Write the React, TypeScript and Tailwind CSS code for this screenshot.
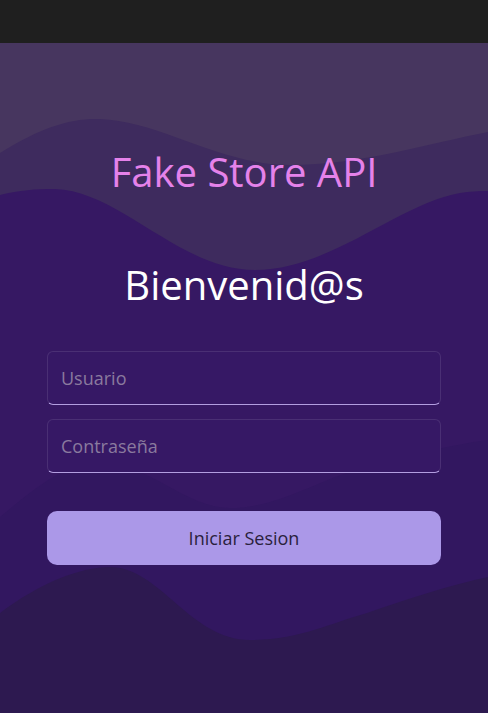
import React, { useState } from 'react';

const Waves = () => (
  <svg
    className="absolute inset-0 w-full h-full"
    viewBox="0 0 488 670"
    preserveAspectRatio="none"
    aria-hidden="true"
  >
    <rect width="488" height="670" fill="#47365f" />
    <path d="M0,110 C40,85 70,75 100,76 C160,78 220,122 290,122 C360,122 430,100 488,89 L488,670 L0,670 Z" fill="#3e2b5e" />
    <path d="M0,152 C20,147 35,146 55,146 C120,148 180,227 255,227 C330,227 400,160 460,150 C475,148 482,148 488,148 L488,670 L0,670 Z" fill="#361863" />
    <path d="M0,474 C35,445 65,420 100,420 C150,420 185,465 230,465 C280,465 320,435 367,424 C410,412 450,402 488,397 L488,670 L0,670 Z" fill="#321760" />
    <path d="M0,570 C40,540 80,524 110,524 C160,524 190,597 250,597 C300,597 330,580 367,570 C410,555 450,542 488,534 L488,670 L0,670 Z" fill="#2d1950" />
  </svg>
);

const App = () => {
  const [user, setUser] = useState('');
  const [password, setPassword] = useState('');

  const handleLogin = (e: React.FormEvent<HTMLFormElement>) => {
    e.preventDefault();
  };

  return (
    <div className="min-h-screen flex flex-col bg-[#2d1950] font-['Open_Sans',sans-serif]">
      <header className="h-[43px] bg-[#1f1f1f] shrink-0"></header>

      <main className="relative flex-1 h-[670px] overflow-hidden">
        <Waves />

        <div className="relative z-10 flex flex-col items-center px-[47px] pt-[101px]">
          <h1 className="text-[40px] leading-[56px] text-[#e582ea] font-normal">Fake Store API</h1>
          <h2 className="mt-[57px] text-[40px] leading-[56px] text-white font-normal">Bienvenid@s</h2>

          <form onSubmit={handleLogin} className="w-full mt-[38px] flex flex-col">
            <input
              type="text"
              value={user}
              onChange={(e) => setUser(e.target.value)}
              placeholder="Usuario"
              className="w-full h-[54px] px-[13px] rounded-[6px] bg-[#361865] border border-white/10 border-b-[#b39ee0] text-[18px] text-white placeholder:text-[#8a7a9e] outline-none"
            />
            <input
              type="password"
              value={password}
              onChange={(e) => setPassword(e.target.value)}
              placeholder="Contraseña"
              className="w-full h-[54px] mt-[14px] px-[13px] rounded-[6px] bg-[#361865] border border-white/10 border-b-[#b39ee0] text-[18px] text-white placeholder:text-[#8a7a9e] outline-none"
            />
            <button
              type="submit"
              className="w-full h-[54px] mt-[38px] rounded-[10px] bg-[#ab98e8] text-[18px] text-[#2a1f3d]"
            >
              Iniciar Sesion
            </button>
          </form>
        </div>
      </main>
    </div>
  );
};

export default App;
